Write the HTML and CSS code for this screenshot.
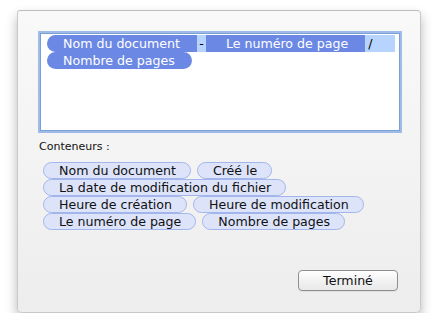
FILE: index.html
```html
<!DOCTYPE html>
<html lang="fr">
<head>
    <meta charset="UTF-8">
    <meta name="viewport" content="width=device-width, initial-scale=1.0">
    <title>En-tête et pied de page</title>
    <link rel="stylesheet" href="styles.css">
</head>
<body>

    <div class="sheet">
        <!-- format field, all tokens selected -->
        <div class="field">
            <div class="field-line">
                <span class="chip chip-left">Nom du document</span><span class="sel sel-dash">-</span><span class="chip chip-mid">Le numéro de page</span><span class="sel sel-slash">/</span>
            </div>
            <div class="field-line">
                <span class="chip">Nombre de pages</span>
            </div>
        </div>

        <div class="label">Conteneurs :</div>

        <div class="palette">
            <div class="palette-row">
                <span class="token">Nom du document</span>
                <span class="token">Créé le</span>
            </div>
            <div class="palette-row">
                <span class="token">La date de modification du fichier</span>
            </div>
            <div class="palette-row">
                <span class="token">Heure de création</span>
                <span class="token">Heure de modification</span>
            </div>
            <div class="palette-row">
                <span class="token">Le numéro de page</span>
                <span class="token">Nombre de pages</span>
            </div>
        </div>

        <div class="actions">
            <button class="done">Terminé</button>
        </div>
    </div>

</body>
</html>
```

FILE: styles.css
```css
body {
    margin: 0;
    padding: 0;
    background-color: #fff;
    font-family: "DejaVu Sans", "Liberation Sans", sans-serif;
    color: #111;
}

.sheet {
    box-sizing: border-box;
    display: flex;
    flex-direction: column;
    width: 404px;
    height: 303px;
    margin: 10px 0 0 17px;
    padding: 22px 22px 21px 21px;
    background: linear-gradient(#f9f9f9, #ededed);
    border: 1px solid #c9c9c9;
    border-top-color: #bdbdbd;
    border-radius: 3px 4px 5px 5px;
    box-shadow: 0 6px 12px rgba(0, 0, 0, 0.28);
}

.field {
    box-sizing: border-box;
    width: 360px;
    height: 98px;
    margin-left: 1px;
    padding: 1px 6px;
    background-color: #fff;
    border: 1px solid #7c9fd8;
    box-shadow: 0 0 0 2px rgba(128, 168, 226, 0.75);
}

.field-line {
    display: flex;
    height: 17px;
    font-size: 12.6px;
    line-height: 17px;
    white-space: nowrap;
}

.field-line span {
    flex-shrink: 0;
}

.chip {
    padding: 0 17px 0 16px;
    background-color: #6b88e5;
    color: #fff;
    border-radius: 9px;
}

.chip-left {
    border-radius: 9px 0 0 9px;
}

.chip-mid {
    padding-left: 20px;
    border-radius: 0;
}

.sel {
    background-color: #b6d4fd;
    color: #000;
}

.sel-dash {
    width: 9px;
    text-align: center;
}

.sel-slash {
    width: 27px;
    padding-left: 3px;
}

.label {
    margin: 9px 0 0 0;
    font-size: 11px;
    line-height: 13px;
}

.palette {
    margin: 9px 0 0 4px;
}

.palette-row {
    display: flex;
    gap: 6px;
    white-space: nowrap;
}

.token {
    box-sizing: border-box;
    flex-shrink: 0;
    height: 17px;
    padding: 0 14px 0 15px;
    font-size: 12.6px;
    line-height: 15px;
    background-color: #dde4fa;
    border: 1px solid #a3b6ec;
    border-radius: 9px;
}

.actions {
    display: flex;
    justify-content: flex-end;
    margin-top: auto;
}

.done {
    width: 100px;
    height: 21px;
    padding: 0;
    font-family: inherit;
    font-size: 12.6px;
    color: #111;
    background: linear-gradient(#ffffff, #f1f1f1 55%, #e9e9e9);
    border: 1px solid #8e8e8e;
    border-radius: 4px;
    box-shadow: 0 1px 0 rgba(0, 0, 0, 0.06);
}
```
